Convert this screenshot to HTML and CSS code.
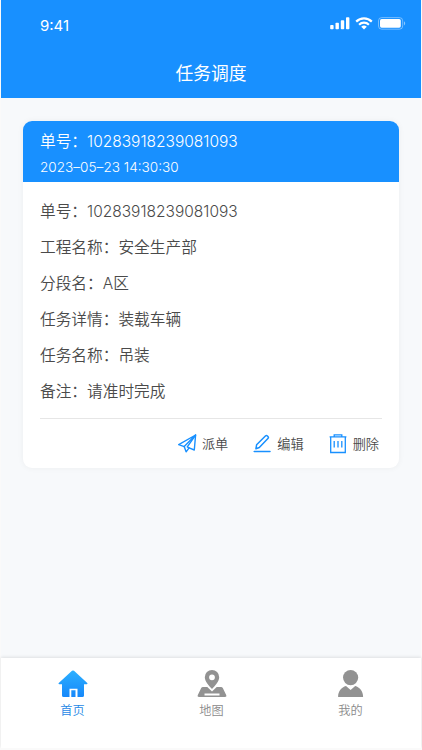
FILE: index.html
```
<!DOCTYPE html>
<html lang="zh-CN">

<head>
    <meta charset="UTF-8">
    <meta name="viewport" content="width=device-width, initial-scale=1.0">
    <title>任务调度</title>
    <link rel="stylesheet" href="styles.css">
</head>

<body>
    <div class="page">
        <div class="header">
            <div class="status_bar">
                <span class="time">9:41</span>
                <div class="status_icons">
                    <svg class="signal" width="20" height="13" viewBox="0 0 20 13" fill="#fff">
                        <rect x="0.2" y="8" width="3.4" height="4.2" rx="0.8"/>
                        <rect x="5.5" y="5.8" width="3.4" height="6.4" rx="0.8"/>
                        <rect x="10.8" y="3.2" width="3.4" height="9" rx="0.8"/>
                        <rect x="16" y="0.3" width="3.4" height="11.9" rx="0.8"/>
                    </svg>
                    <svg class="wifi" width="18" height="13" viewBox="0 0 18 13" fill="none" stroke="#fff" stroke-width="2.2">
                        <path d="M1.2 4.6a11 11 0 0 1 15.6 0"/>
                        <path d="M4.1 7.7a7 7 0 0 1 9.8 0"/>
                        <path d="M6.2 9.8a4 4 0 0 1 5.6 0L9 12.6z" fill="#fff" stroke="none"/>
                    </svg>
                    <svg class="battery" width="28" height="13" viewBox="0 0 28 13">
                        <rect x="0.5" y="0.6" width="24.2" height="11.6" rx="3.2" fill="none" stroke="#fff" stroke-opacity="0.4"/>
                        <rect x="2" y="2.1" width="20.8" height="8.6" rx="1.6" fill="#fff"/>
                        <path d="M26 4.3c1.6.8 1.6 3.4 0 4.2z" fill="#fff" fill-opacity="0.5"/>
                    </svg>
                </div>
            </div>
            <h1 class="title">任务调度</h1>
        </div>

        <div class="content">
            <div class="card">
                <div class="card_header">
                    <p class="order">单号：<span class="num">10283918239081093</span></p>
                    <p class="date">2023–05–23 14:30:30</p>
                </div>
                <ul class="card_list">
                    <li>单号：<span class="num">10283918239081093</span></li>
                    <li>工程名称：安全生产部</li>
                    <li>分段名：<span class="num">A</span>区</li>
                    <li>任务详情：装载车辆</li>
                    <li>任务名称：吊装</li>
                    <li>备注：请准时完成</li>
                </ul>
                <div class="card_footer">
                    <a href="javascript:;" class="action">
                        <svg width="19" height="20" viewBox="0 0 19 20" fill="none" stroke="#1890ff" stroke-width="1.4" stroke-linejoin="round" stroke-linecap="round">
                            <path d="M17.6 1L.7 10.6l5.5 2L17.6 1l-1.3 15-5.2-2.2"/>
                            <path d="M6.2 12.6l1.9 5.2 3-4-1.8-1L17.6 1"/>
                        </svg>
                        <span>派单</span>
                    </a>
                    <a href="javascript:;" class="action">
                        <svg width="19" height="20" viewBox="0 0 19 20" fill="none" stroke="#1890ff" stroke-width="1.5" stroke-linejoin="round" stroke-linecap="round">
                            <path d="M2.9 14.8l.7-4L12.4 2q1-1 2 0l.5.5q1 1 0 2L6.3 13.5z"/>
                            <path d="M1.2 17.6h15.8"/>
                        </svg>
                        <span>编辑</span>
                    </a>
                    <a href="javascript:;" class="action">
                        <svg width="19" height="20" viewBox="0 0 19 20" fill="none" stroke="#1890ff" stroke-width="1.3">
                            <path d="M.6 2.9h16.8M5.2 2.9V.8h7.6v2.1M1.7 2.9v15.6h14.6V2.9"/>
                            <path d="M5.2 7v6.6M9 7v6.6M12.8 7v6.6"/>
                        </svg>
                        <span>删除</span>
                    </a>
                </div>
            </div>
        </div>

        <div class="tab_bar">
            <a href="javascript:;" class="tab active">
                <svg width="30" height="28" viewBox="0 0 30 28">
                    <defs>
                        <linearGradient id="home_fill" x1="0" y1="0" x2="0" y2="1">
                            <stop offset="0" stop-color="#2cb0ff"/>
                            <stop offset="1" stop-color="#1688fa"/>
                        </linearGradient>
                    </defs>
                    <path fill="url(#home_fill)" d="M14 .8q1-.8 2 0l13 12q1.2 1.2-.4 1.4H26V25.4q0 1.6-1.6 1.6h-4.9v-8.2h-8V27H5.6Q4 27 4 25.4V14.2H1.4q-1.6-.2-.4-1.4zM13.3 20.3h4.2V27h-4.2z"/>
                </svg>
                <span>首页</span>
            </a>
            <a href="javascript:;" class="tab">
                <svg width="30" height="28" viewBox="0 0 30 28" fill="#929292">
                    <path fill-rule="evenodd" d="M15 0a7.2 7.2 0 0 1 7.2 7.2c0 4.2-4.3 8.5-7.2 11.8-2.9-3.3-7.2-7.6-7.2-11.8A7.2 7.2 0 0 1 15 0zm0 4.4a2.9 2.9 0 1 0 0 5.8 2.9 2.9 0 0 0 0-5.8z"/>
                    <path fill-rule="evenodd" d="M6 17h4.3l4.7 4.4 4.7-4.4H24q1.2 0 1.8 1l3.5 7.2q.7 1.8-1.3 1.8H2Q0 27 .7 25.2L4.2 18q.6-1 1.8-1zM7.5 23.4v2.1h15v-2.1z"/>
                </svg>
                <span>地图</span>
            </a>
            <a href="javascript:;" class="tab">
                <svg width="30" height="28" viewBox="0 0 30 28" fill="#929292">
                    <circle cx="14.6" cy="7.6" r="7.6"/>
                    <path d="M10 16l4.6 4.1 4.6-4.1c4.5 1.2 7.9 5 7.9 11h-25c0-6 3.4-9.8 7.9-11z"/>
                </svg>
                <span>我的</span>
            </a>
        </div>
    </div>
</body>

</html>
```

FILE: styles.css
```
* {
    margin: 0;
    padding: 0;
    box-sizing: border-box;
}

body {
    background-color: #fafafa;
    font-family: "Noto Sans CJK SC", sans-serif;
    color: #4a4a4a;
}

ul {
    list-style: none;
}

a {
    color: inherit;
    text-decoration: none;
}

svg {
    display: block;
}

.page {
    display: flex;
    flex-direction: column;
    height: 748px;
    margin: 0 1px;
    background-color: #f7f9fb;
}

.header {
    height: 98px;
    background-color: #1890ff;
    color: #fff;
}

.status_bar {
    display: flex;
    justify-content: space-between;
    height: 48px;
    padding: 17px 15px 0 39px;
}

.time {
    font-family: Inter, sans-serif;
    font-size: 15px;
    font-weight: 400;
    line-height: 17px;
}

.status_icons {
    display: flex;
}

.wifi {
    margin-left: 5px;
}

.battery {
    margin-left: 5px;
}

.title {
    font-size: 17.8px;
    font-weight: 400;
    line-height: 48px;
    text-align: center;
}

.content {
    flex: 1;
    padding: 23px 22px 0;
}

.card {
    height: 347px;
    border-radius: 9px;
    background-color: #fff;
    box-shadow: 0 0 6px rgba(0, 0, 0, 0.05);
    overflow: hidden;
}

.card_header {
    height: 61px;
    padding: 8px 17px 0;
    background-color: #1890ff;
    color: #fff;
}

.order {
    font-size: 15.7px;
    font-weight: 350;
    line-height: 24px;
}

.num {
    font-family: Inter, "Noto Sans CJK SC", sans-serif;
    font-size: 15.5px;
    font-weight: 300;
}

.date {
    margin-top: 2px;
    font-family: Inter, sans-serif;
    font-size: 13.6px;
    font-weight: 300;
    line-height: 22px;
}

.card_list {
    margin: 0 17px;
    padding: 11px 0 9px;
    border-bottom: 1px solid #e6e6e6;
    font-size: 15.7px;
    font-weight: 350;
}

.card_list li {
    height: 36px;
    line-height: 36px;
}

.card_footer {
    display: flex;
    justify-content: flex-end;
    gap: 25px;
    height: 50px;
    padding-right: 20px;
    font-size: 13.2px;
    font-weight: 350;
    line-height: 20px;
}

.action {
    display: flex;
    align-items: center;
    gap: 5px;
}

.tab_bar {
    display: flex;
    height: 90px;
    padding: 0 1px 0 2px;
    background-color: #fff;
    box-shadow: 0 -1px 3px rgba(0, 0, 0, 0.1);
    font-size: 12.2px;
    font-weight: 350;
    color: #8a8a8a;
}

.tab {
    display: flex;
    flex: 1;
    flex-direction: column;
    align-items: center;
    padding-top: 12px;
}

.tab span {
    margin-top: 3px;
    line-height: 18px;
}

.active {
    color: #1e88e5;
}
```
